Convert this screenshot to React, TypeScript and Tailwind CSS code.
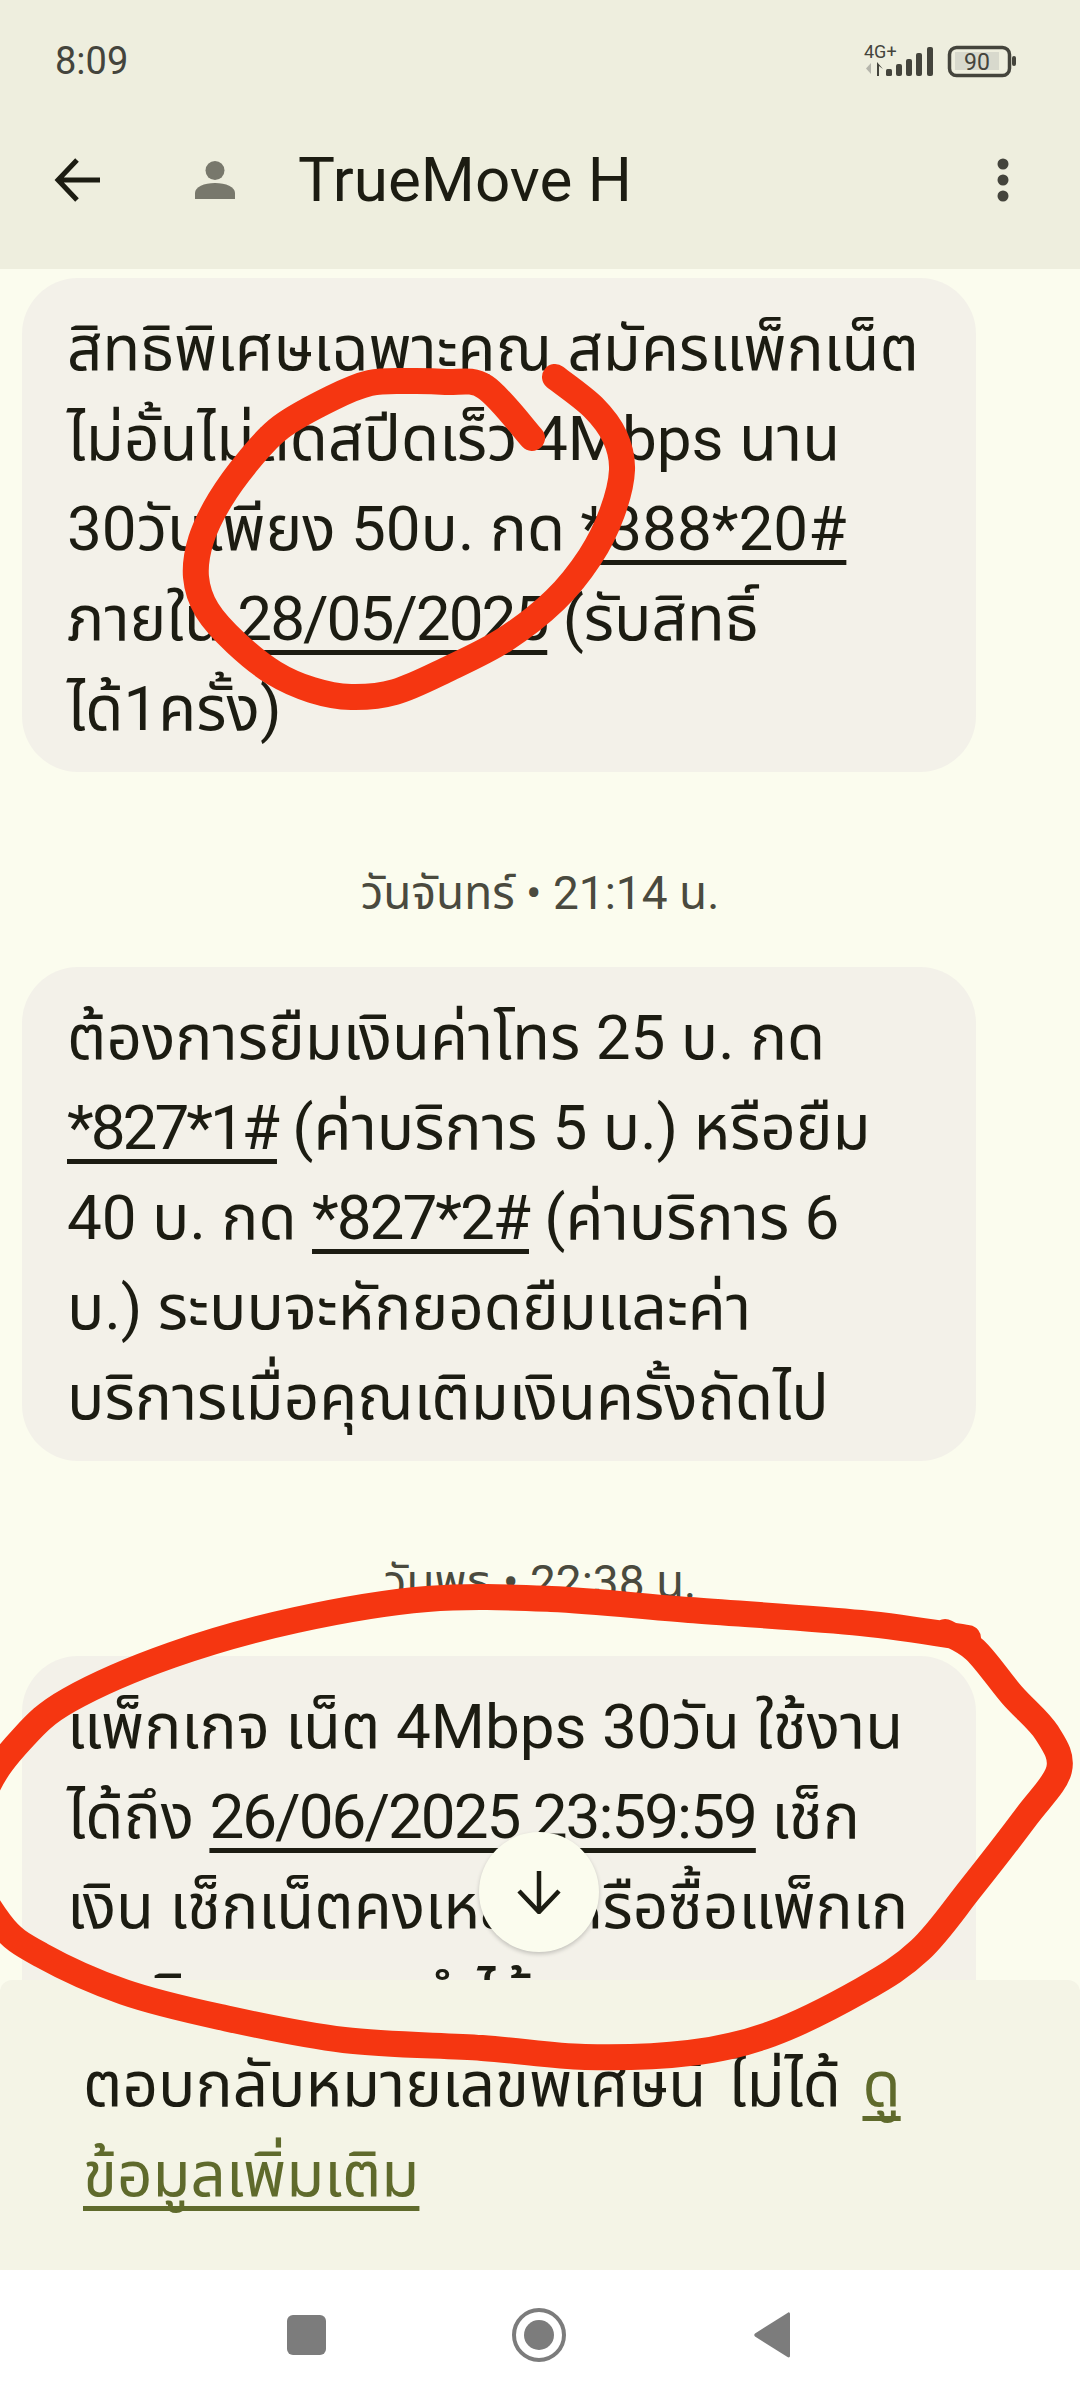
// App.tsx
import { Fragment, ReactNode } from 'react';

type Pt = [number, number];

// catmull-rom through the hand drawn points so the marker stroke stays smooth
function smoothPath(pts: Pt[]) {
  let d = `M${pts[0][0]} ${pts[0][1]}`;
  for (let i = 0; i < pts.length - 1; i++) {
    const p0 = pts[i - 1] || pts[i];
    const p1 = pts[i];
    const p2 = pts[i + 1];
    const p3 = pts[i + 2] || p2;
    const c1x = p1[0] + (p2[0] - p0[0]) / 6;
    const c1y = p1[1] + (p2[1] - p0[1]) / 6;
    const c2x = p2[0] - (p3[0] - p1[0]) / 6;
    const c2y = p2[1] - (p3[1] - p1[1]) / 6;
    d += ` C${c1x.toFixed(1)} ${c1y.toFixed(1)} ${c2x.toFixed(1)} ${c2y.toFixed(1)} ${p2[0]} ${p2[1]}`;
  }
  return d;
}

const topCircle: Pt[] = [
  [532, 438], [485, 387], [446, 382], [408, 381], [370, 383], [332, 398], [281, 427], [249, 460],
  [220, 500], [201, 540], [196, 577], [207, 610], [236, 643], [274, 673], [312, 690], [351, 697],
  [395, 692], [446, 670], [504, 640], [555, 600], [590, 557], [612, 513], [622, 470], [615, 437],
  [593, 407], [555, 377],
];

const bottomCircle: Pt[] = [
  [968, 1638], [861, 1623], [689, 1610], [551, 1599], [427, 1599], [296, 1620], [172, 1655],
  [69, 1700], [21, 1740], [-14, 1790], [-30, 1860], [0, 1923], [41, 1955], [124, 1992], [220, 2017],
  [344, 2040], [482, 2048], [585, 2057], [689, 2053], [771, 2034], [862, 1990], [920, 1950],
  [971, 1888], [1026, 1817], [1059, 1770], [1047, 1733], [1012, 1695], [975, 1650], [945, 1632],
];

const linkUnderline =
  'underline decoration-[5px] underline-offset-[10px] [text-decoration-skip-ink:none]';

function Bubble({ lines }: { lines: ReactNode[] }) {
  return (
    <div className="w-[954px] shrink-0 rounded-[56px] bg-[#f3f1e9] pl-[45px] pr-[20px] pt-[26px] pb-[18px] text-[62px] leading-[90px] whitespace-nowrap text-[#1c1c12]">
      {lines.map((line, i) => (
        <Fragment key={i}>
          {line}
          <br />
        </Fragment>
      ))}
    </div>
  );
}

function DateLabel({ text }: { text: string }) {
  return (
    <div className="h-[195px] w-[1036px] shrink-0 pt-[91px] text-center text-[46px] leading-[60px] text-[#4a4a3e]">
      {text}
    </div>
  );
}

function StatusIcons() {
  return (
    <svg width="160" height="40" viewBox="860 40 160 40" className="mr-[62px] text-[#44443c]">
      <text x="866" y="57" fontSize="18" fill="currentColor" fontFamily="Roboto">4G+</text>
      <path d="M873 62v11l-5-5.500z" fill="#b5b5ab" />
      <path d="M879 61v14h2v-10l4 3z" fill="currentColor" />
      <rect x="888" y="68" width="6" height="7" rx="1.500" fill="currentColor" />
      <rect x="898" y="63" width="6" height="12" rx="2" fill="currentColor" />
      <rect x="908" y="58" width="6" height="17" rx="2" fill="currentColor" />
      <rect x="918" y="52" width="6" height="23" rx="2" fill="currentColor" />
      <rect x="929" y="46" width="6" height="29" rx="2" fill="currentColor" />
      <rect x="951.500" y="46.500" width="60" height="28" rx="7" fill="none" stroke="currentColor" strokeWidth="3.500" />
      <rect x="957" y="51" width="44" height="18" fill="#d8d9cd" />
      <rect x="1014" y="55" width="4" height="10" rx="2" fill="currentColor" />
      <text x="979" y="69" fontSize="23" fill="currentColor" fontFamily="Roboto" textAnchor="middle">90</text>
    </svg>
  );
}

export default function App() {
  return (
    <div className="relative flex h-[2400px] w-[1080px] flex-col overflow-hidden bg-[#fbfcee] font-['Roboto','Noto_Sans','Noto_Sans_Thai',sans-serif]">
      {/* status bar + app bar */}
      <header className="h-[269px] shrink-0 bg-[#eeeede]">
        <div className="flex h-[121px] items-center justify-between pl-[55px]">
          <span className="text-[38px] leading-none text-[#44443c]">8:09</span>
          <StatusIcons />
        </div>
        <div className="flex h-[118px] items-center">
          <svg width="48" height="46" viewBox="0 0 48 46" className="ml-[54px]" fill="none" stroke="#1c1c12" strokeWidth="5">
            <path d="M46 23H5M23 3 4 23l19 20" />
          </svg>
          <svg width="40" height="38" viewBox="0 0 40 38" className="ml-[93px]" fill="#78786c">
            <ellipse cx="20" cy="9.500" rx="9.500" ry="9.500" />
            <path d="M0 38v-6c0-6 9-10 20-10s20 4 20 10v6z" />
          </svg>
          <span className="ml-[63px] text-[62px] leading-none text-[#1c1c12]">TrueMove H</span>
          <svg width="14" height="44" viewBox="0 0 14 44" className="ml-auto mr-[70px]" fill="#44443c">
            <circle cx="7" cy="6" r="5.500" />
            <circle cx="7" cy="22" r="5.500" />
            <circle cx="7" cy="38" r="5.500" />
          </svg>
        </div>
      </header>

      {/* messages */}
      <main className="relative flex min-h-0 flex-1 flex-col overflow-hidden pl-[22px] pt-[9px]">
        <Bubble
          lines={[
            'สิทธิพิเศษเฉพาะคุณ สมัครแพ็กเน็ต',
            'ไม่อั้นไม่ลดสปีดเร็ว 4Mbps นาน',
            <>30วันเพียง 50บ. กด <span className={linkUnderline}>*388*20#</span></>,
            <>ภายใน <span className={`tracking-[-2px] ${linkUnderline}`}>28/05/2025</span> (รับสิทธิ์</>,
            'ได้1ครั้ง)',
          ]}
        />
        <DateLabel text="วันจันทร์ • 21:14 น." />
        <Bubble
          lines={[
            'ต้องการยืมเงินค่าโทร 25 บ. กด',
            <><span className={`tracking-[-3px] ${linkUnderline}`}>*827*1#</span> (ค่าบริการ 5 บ.) หรือยืม</>,
            <>40 บ. กด <span className={`tracking-[-2px] ${linkUnderline}`}>*827*2#</span> (ค่าบริการ 6</>,
            'บ.) ระบบจะหักยอดยืมและค่า',
            'บริการเมื่อคุณเติมเงินครั้งถัดไป',
          ]}
        />
        <DateLabel text="วันพุธ • 22:38 น." />
        <Bubble
          lines={[
            'แพ็กเกจ เน็ต 4Mbps 30วัน ใช้งาน',
            <>ได้ถึง <span className={`tracking-[-2px] ${linkUnderline}`}>26/06/2025 23:59:59</span> เช็ก</>,
            'เงิน เช็กเน็ตคงเหลือ หรือซื้อแพ็กเก',
            'จเสริม กดเลข ทำได้',
          ]}
        />
        <button className="absolute left-[479px] top-[1563px] flex h-[120px] w-[120px] items-center justify-center rounded-full bg-[#fbfcee] shadow-[0_2px_4px_rgba(0,0,0,0.2)]">
          <svg width="44" height="44" viewBox="0 0 44 44" fill="none" stroke="#1c1c12" strokeWidth="4.500">
            <path d="M22 1v39M2 21l20 21 20-21" />
          </svg>
        </button>
      </main>

      {/* reply notice */}
      <footer className="relative -mt-[12px] h-[290px] shrink-0 rounded-t-[12px] bg-[#f4f4e6] pl-[83px] pt-[60px] text-[62px] leading-[90px] text-[#1c1c12] whitespace-nowrap [word-spacing:6px]">
        ตอบกลับหมายเลขพิเศษนี้ ไม่ได้{' '}
        <span className={`text-[#5f6a2c] ${linkUnderline}`}>
          ดู
          <br />
          ข้อมูลเพิ่มเติม
        </span>
      </footer>

      {/* android nav */}
      <nav className="flex h-[130px] shrink-0 items-center bg-white">
        <div className="ml-[287px] h-[40px] w-[39px] rounded-[6px] bg-[#7c7c7c]" />
        <div className="ml-[186px] flex h-[54px] w-[54px] items-center justify-center rounded-full border-[4px] border-[#7c7c7c]">
          <div className="h-[30px] w-[30px] rounded-full bg-[#7c7c7c]" />
        </div>
        <svg width="36" height="46" viewBox="0 0 36 46" className="ml-[188px]" fill="#7c7c7c">
          <path d="M36 2v42c0 1-1 2-2.500 1L1 24.500c-1-1-1-2 0-3L33.500 1C35-.5 36 1 36 2z" />
        </svg>
      </nav>

      {/* red marker scribbles on top of the screenshot */}
      <svg className="pointer-events-none absolute left-0 top-0" width="1080" height="2400" viewBox="0 0 1080 2400" fill="none" stroke="#f53611" strokeWidth="26" strokeLinecap="round" strokeLinejoin="round">
        <path d={smoothPath(topCircle)} />
        <path d={smoothPath(bottomCircle)} />
      </svg>
    </div>
  );
}
